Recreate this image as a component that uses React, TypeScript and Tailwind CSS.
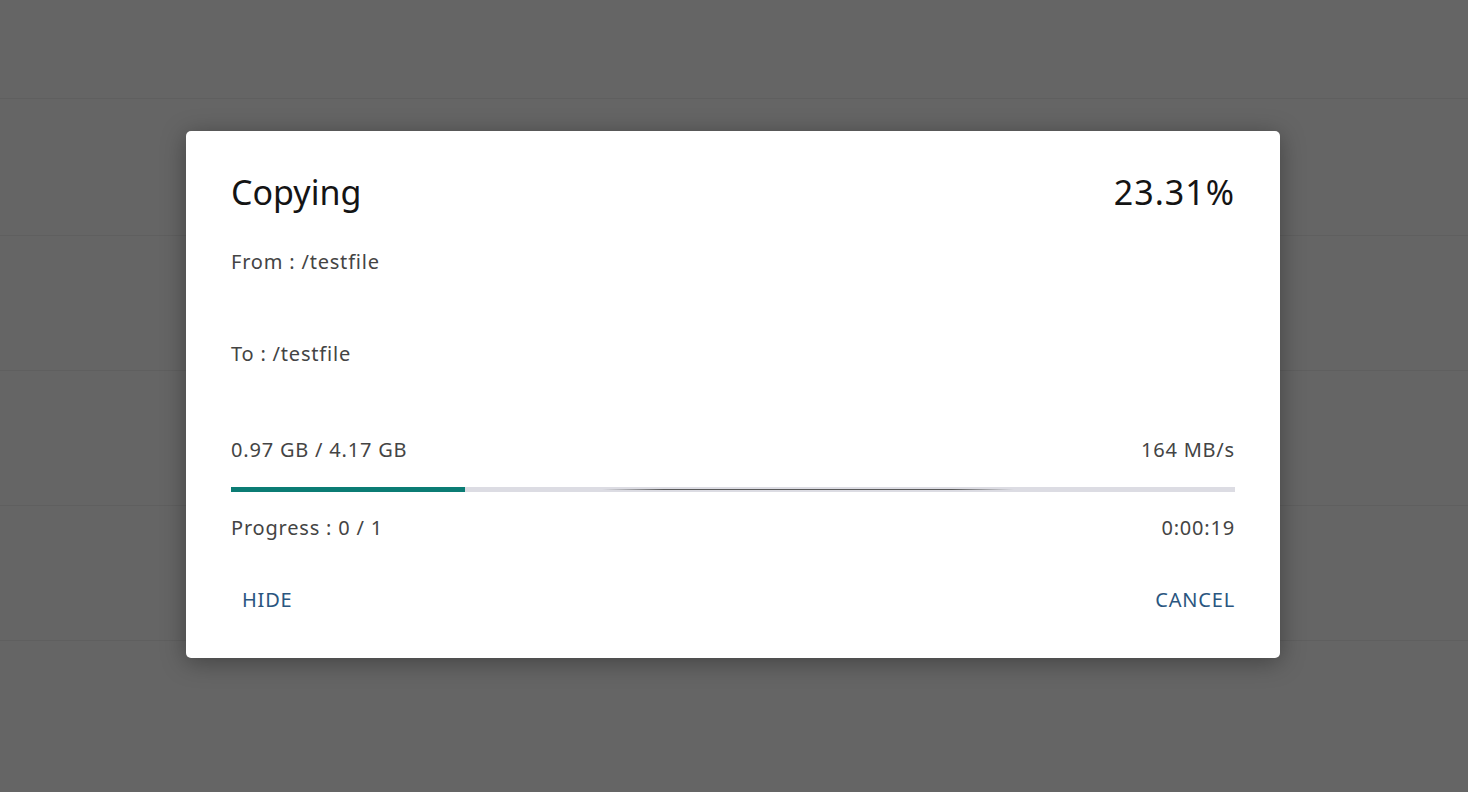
const rows = [98, 235, 370, 505, 640];

const CopyDialog = () => {
  const percent = 23.31;

  return (
    <div className="w-[1094px] rounded-[5px] bg-white px-[45px] pt-[41px] pb-[44px] shadow-[0_4px_24px_rgba(0,0,0,0.35)]">
      {/* Header */}
      <div className="flex h-[40px] items-center justify-between">
        <h1 className="text-[34px] leading-[40px] font-normal text-[#141414]">Copying</h1>
        <span className="text-[34px] leading-[40px] tracking-[1px] text-[#141414]">23.31%</span>
      </div>

      <div className="text-[20px] leading-[28px] tracking-[0.8px] text-[#444]">
        <p className="mt-[36px] h-[28px]">From : /testfile</p>
        <p className="mt-[64px] h-[28px]">To : /testfile</p>

        <div className="mt-[68px] flex h-[28px] items-center justify-between">
          <span>0.97 GB / 4.17 GB</span>
          <span>164 MB/s</span>
        </div>

        {/* Progress bar */}
        <div className="relative mt-[23px] h-[5px] bg-[#dcdce3]">
          <div className="h-full bg-[#0b7c74]" style={{ width: `${percent}%` }} />
          <div className="absolute left-[37%] right-[22%] top-[2px] h-px bg-[linear-gradient(90deg,transparent,#5a5a5a_15%,#5a5a5a_85%,transparent)]" />
        </div>

        <div className="mt-[22px] flex h-[28px] items-center justify-between">
          <span>Progress : 0 / 1</span>
          <span>0:00:19</span>
        </div>

        {/* Actions */}
        <div className="mt-[44px] flex h-[28px] items-center justify-between text-[#2a5680]">
          <button className="pl-[11px] tracking-[0.8px]">HIDE</button>
          <button className="tracking-[0.8px]">CANCEL</button>
        </div>
      </div>
    </div>
  );
};

export default function App() {
  return (
    <div
      className="relative h-[792px] w-[1468px] overflow-hidden bg-[#656565]"
      style={{ fontFamily: "'Noto Sans', 'Open Sans', sans-serif" }}
    >
      {/* dimmed list rows behind the dialog */}
      {rows.map((y) => (
        <div key={y} className="absolute left-0 right-0 h-px bg-[#5f5f5f]" style={{ top: y }} />
      ))}
      <div className="relative flex h-full items-start pt-[131px] pl-[186px]">
        <CopyDialog />
      </div>
    </div>
  );
}
